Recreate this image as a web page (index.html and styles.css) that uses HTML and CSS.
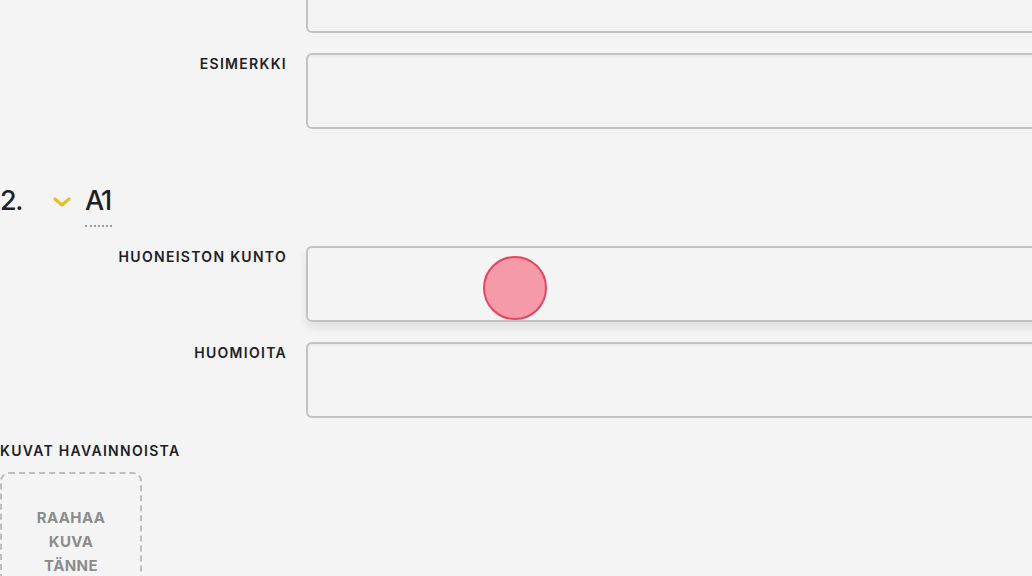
FILE: index.html
```html
<!DOCTYPE html>
<html lang="fi">
<head>
<meta charset="utf-8">
<title>Havainnot</title>
<link rel="stylesheet" href="styles.css">
</head>
<body>
<div class="page">
  <div class="fields first">
    <div class="row">
      <label class="label"></label>
      <div class="box"></div>
    </div>
    <div class="row">
      <label class="label">ESIMERKKI</label>
      <div class="box"></div>
    </div>
  </div>

  <div class="section-head">
    <span class="num">2.</span>
    <svg class="chev" width="20" height="12" viewBox="0 0 20 12"><path d="M3 3 L10 9 L17 3" fill="none" stroke="#e5bf27" stroke-width="3.2" stroke-linecap="round" stroke-linejoin="round"/></svg>
    <span class="title">A1</span>
  </div>

  <div class="fields">
    <div class="row">
      <label class="label">HUONEISTON KUNTO</label>
      <div class="box focus"></div>
    </div>
    <div class="row">
      <label class="label">HUOMIOITA</label>
      <div class="box"></div>
    </div>
  </div>

  <div class="photos">
    <div class="photos-label">KUVAT HAVAINNOISTA</div>
    <div class="drop">RAAHAA<br>KUVA<br>TÄNNE</div>
  </div>

  <div class="cursor"></div>
</div>
</body>
</html>
```
FILE: styles.css
```css
html, body {
  margin: 0;
  padding: 0;
  background: #f4f4f4;
  overflow: hidden;
  width: 1032px;
  height: 576px;
}
.page {
  position: relative;
  display: flow-root;
  font-family: Inter, "Liberation Sans", sans-serif;
  color: #1d2126;
}
.fields {
  display: flex;
  flex-direction: column;
  gap: 20px;
}
.fields.first {
  margin-top: -43px;
}
.row {
  display: grid;
  grid-template-columns: 286px 740px;
  column-gap: 20px;
}
.label {
  text-align: right;
  font-size: 14px;
  font-weight: 600;
  letter-spacing: 1.3px;
  margin-right: -1px;
  padding-top: 2px;
  line-height: 17px;
}
.box {
  height: 72px;
  border: 2px solid #c2c2c2;
  border-radius: 6px;
  background: #f4f4f4;
  box-shadow: inset 0 2px 3px rgba(0,0,0,0.04);
}
.box.focus {
  box-shadow: 0 6px 10px rgba(0,0,0,0.08);
}
.section-head {
  display: flex;
  align-items: flex-start;
  height: 117px;
  padding-top: 57px;
  box-sizing: border-box;
}
.num {
  font-size: 27px;
  line-height: 30px;
  font-weight: 500;
  width: 52px;
  letter-spacing: -1.5px;
}
.chev {
  margin-right: 13px;
  margin-top: 10px;
}
.title {
  font-size: 27px;
  font-weight: 500;
  letter-spacing: -2px;
  border-bottom: 2px dotted #9a9a9a;
  line-height: 30px;
  padding-bottom: 9px;
  padding-right: 2px;
}
.photos {
  padding-top: 24px;
}
.photos-label {
  font-size: 14px;
  font-weight: 600;
  letter-spacing: 1.3px;
  line-height: 17px;
}
.drop {
  margin-top: 13px;
  width: 138px;
  height: 140px;
  border: 2px dashed #bdbdbd;
  border-radius: 9px;
  box-sizing: content-box;
  text-align: center;
  font-size: 15px;
  font-weight: 700;
  color: #8c8c8c;
  line-height: 24px;
  padding-top: 32px;
  letter-spacing: 0.4px;
}
.cursor {
  position: absolute;
  left: 483px;
  top: 256px;
  width: 60px;
  height: 60px;
  border-radius: 50%;
  background: #f49aa8;
  border: 2.5px solid #e9435f;
}
```
